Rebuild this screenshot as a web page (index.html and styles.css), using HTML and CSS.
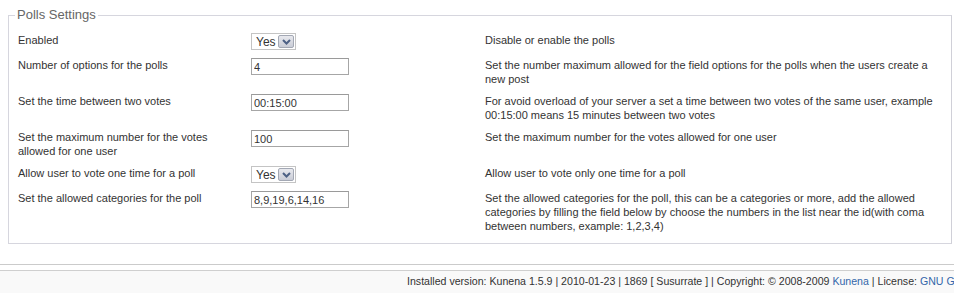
FILE: index.html
```html
<!DOCTYPE html>
<html>
<head>
<meta charset="utf-8">
<link rel="stylesheet" href="styles.css">
</head>
<body>
<fieldset class="box">
  <legend class="box-title">Polls Settings</legend>
  <div class="grid">
    <div class="lbl">Enabled</div>
    <div class="ctl"><span class="sel"><span class="sel-val">Yes</span><span class="sel-btn"><svg width="9" height="6" viewBox="0 0 9 6"><path d="M1 1 L4.5 4.5 L8 1" fill="none" stroke="#4d6185" stroke-width="2"/></svg></span></span></div>
    <div class="desc">Disable or enable the polls</div>

    <div class="lbl">Number of options for the polls</div>
    <div class="ctl"><input class="txt" type="text" value="4"></div>
    <div class="desc">Set the number maximum allowed for the field options for the polls when the users create a new post</div>

    <div class="lbl">Set the time between two votes</div>
    <div class="ctl"><input class="txt" type="text" value="00:15:00"></div>
    <div class="desc">For avoid overload of your server a set a time between two votes of the same user, example 00:15:00 means 15 minutes between two votes</div>

    <div class="lbl">Set the maximum number for the votes allowed for one user</div>
    <div class="ctl"><input class="txt" type="text" value="100"></div>
    <div class="desc">Set the maximum number for the votes allowed for one user</div>

    <div class="lbl">Allow user to vote one time for a poll</div>
    <div class="ctl"><span class="sel"><span class="sel-val">Yes</span><span class="sel-btn"><svg width="9" height="6" viewBox="0 0 9 6"><path d="M1 1 L4.5 4.5 L8 1" fill="none" stroke="#4d6185" stroke-width="2"/></svg></span></span></div>
    <div class="desc">Allow user to vote only one time for a poll</div>

    <div class="lbl">Set the allowed categories for the poll</div>
    <div class="ctl"><input class="txt" type="text" value="8,9,19,6,14,16"></div>
    <div class="desc">Set the allowed categories for the poll, this can be a categories or more, add the allowed categories by filling the field below by choose the numbers in the list near the id(with coma between numbers, example: 1,2,3,4)</div>
  </div>
</fieldset>
<div class="sep"></div>
<div class="footer">Installed version: Kunena 1.5.9 | 2010-01-23 | 1869 [ Susurrate ] | Copyright: © 2008-2009 <a class="flink" href="#">Kunena</a> | License: <a class="flink" href="#">GNU GPL</a></div>
</body>
</html>
```
FILE: styles.css
```css
html, body {
  margin: 0;
  padding: 0;
  background: #fff;
  overflow: hidden;
}
body {
  font-family: "Liberation Sans", Arial, sans-serif;
  font-size: 11px;
  color: #333;
  width: 954px;
}
.box {
  margin: 7px 2px 0 8px;
  padding: 6px 11px 6px 9px;
  border: 1px solid #d6d6de;
  border-right-color: #d0d0d8;
  min-width: 0;
}
.box-title {
  font-size: 13px;
  line-height: 16px;
  color: #666;
  padding: 0 2px;
  margin-left: -3px;
}
.grid {
  display: grid;
  grid-template-columns: 233px 234px 1fr;
  line-height: 14px;
}
.lbl, .ctl, .desc {
  padding: 4px 0;
}
.lbl {
  padding-right: 26px;
}
.ctl {
  display: flex;
  align-items: flex-start;
}
.txt {
  box-sizing: border-box;
  width: 98px;
  height: 17px;
  margin: 0;
  padding: 0 2px;
  border: 1px solid #a6a6a6;
  border-top-color: #9a9a9a;
  font-family: "Liberation Sans", Arial, sans-serif;
  font-size: 11px;
  color: #333;
  background: #fff;
  outline: none;
}
.sel {
  display: inline-flex;
  align-items: center;
  box-sizing: border-box;
  height: 17px;
  border: 1px solid #c4c4c4;
  background: #fff;
  padding: 0 1px 0 4px;
  font-size: 12px;
  color: #333;
}
.sel-val {
  width: 22px;
}
.sel-btn {
  display: inline-flex;
  align-items: center;
  justify-content: center;
  box-sizing: border-box;
  width: 16px;
  height: 13px;
  border: 1px solid #a3a8b4;
  border-radius: 2px;
  background: linear-gradient(#e8e9ee, #c9ccd6);
}
.sep {
  margin-top: 20px;
  border-top: 1px solid #cbcbcb;
  height: 5px;
}
.footer {
  box-sizing: border-box;
  height: 25px;
  border-top: 1px solid #cfcfcf;
  border-bottom: 1px solid #cfcfcf;
  background: #f9f9f9;
  padding-left: 407px;
  line-height: 21px;
  font-size: 10.6px;
  color: #333;
  white-space: nowrap;
  overflow: hidden;
}
.flink {
  color: #3366aa;
  text-decoration: none;
}
```
